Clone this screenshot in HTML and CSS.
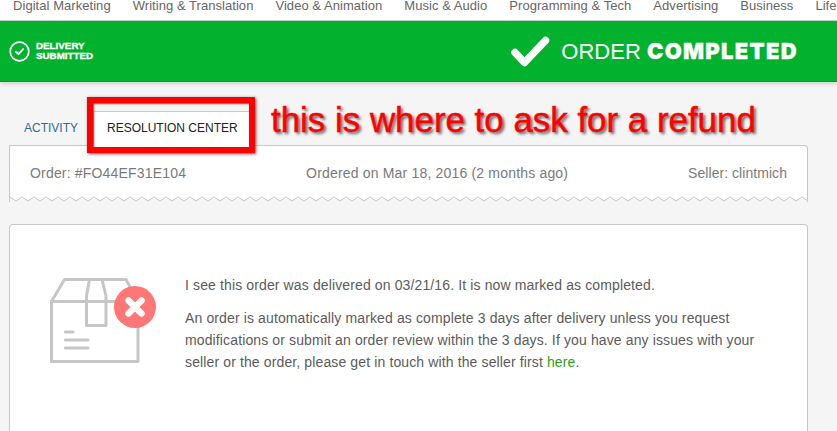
FILE: index.html
```html
<!DOCTYPE html>
<html lang="en">
<head>
    <meta charset="UTF-8">
    <title>Order completed</title>
    <link rel="stylesheet" href="styles.css">
</head>
<body>
    <nav class="top-nav">
        <a href="#">Digital Marketing</a>
        <a href="#">Writing &amp; Translation</a>
        <a href="#">Video &amp; Animation</a>
        <a href="#">Music &amp; Audio</a>
        <a href="#">Programming &amp; Tech</a>
        <a href="#">Advertising</a>
        <a href="#">Business</a>
        <a href="#">Lifestyle</a>
    </nav>

    <header class="status-bar">
        <div class="status-step">
            <svg class="step-icon" viewBox="0 0 21 21" width="21" height="21">
                <circle cx="10.5" cy="10.5" r="9.3" fill="none" stroke="#fff" stroke-width="1.7"/>
                <path d="M7 10.8l2.500 2.400 4.600-5" fill="none" stroke="#fff" stroke-width="1.8" stroke-linecap="round" stroke-linejoin="round"/>
            </svg>
            <div class="step-label">DELIVERY<br>SUBMITTED</div>
        </div>
        <div class="status-title">
            <svg class="title-check" viewBox="0 0 39 31" width="39" height="31">
                <path d="M4 16.500l9.500 10L34.500 4.500" fill="none" stroke="#fff" stroke-width="7.500" stroke-linecap="round" stroke-linejoin="round"/>
            </svg>
            <h1>ORDER <strong>COMPLETED</strong></h1>
        </div>
    </header>

    <main class="content">
        <div class="tabs">
            <a class="tab" href="#">ACTIVITY</a>
            <a class="tab active" href="#">RESOLUTION CENTER</a>
        </div>

        <section class="order-card">
            <span>Order: #FO44EF31E104</span>
            <span>Ordered on Mar 18, 2016 (2 months ago)</span>
            <span class="seller">Seller: clintmich</span>
            <svg class="zigzag" width="100%" height="6">
                <defs>
                    <pattern id="zig" width="12" height="6" patternUnits="userSpaceOnUse">
                        <path d="M0 1l6 4 6-4V6H0z" fill="#f5f5f5"/>
                        <path d="M0 1l6 4 6-4" fill="none" stroke="#c4c4c4" stroke-width="1"/>
                    </pattern>
                </defs>
                <rect width="100%" height="6" fill="url(#zig)"/>
            </svg>
        </section>

        <section class="notice-card">
            <svg class="box-icon" viewBox="0 0 90 85" width="90" height="85">
                <g fill="none" stroke="#c6c6c6" stroke-width="3" stroke-linejoin="round" stroke-linecap="round">
                    <path d="M1.500 23.500H88V83.500H1.500z"/>
                    <path d="M1.500 23.500L14.500 1.500H76L88 23.500"/>
                    <path d="M39.500 1.500L36.500 18V47.500H56V18L52 1.500"/>
                </g>
                <g stroke="#c6c6c6" stroke-width="3.200" stroke-linecap="round">
                    <path d="M15.500 54H23"/>
                    <path d="M15.500 62H38"/>
                    <path d="M15.500 70H38"/>
                </g>
                <circle cx="85" cy="29" r="21" fill="#ff7676"/>
                <path d="M78.500 22.500l13 13M91.500 22.500l-13 13" stroke="#fff" stroke-width="6.500" stroke-linecap="round"/>
            </svg>
            <div class="notice-text">
                <p>I see this order was delivered on 03/21/16. It is now marked as completed.</p>
                <p>An order is automatically marked as complete 3 days after delivery unless you request modifications or submit an order review within the 3 days. If you have any issues with your seller or the order, please get in touch with the seller first <a href="#">here</a>.</p>
            </div>
        </section>

        <div class="callout-box"></div>
        <div class="callout-text">this is where to ask for a refund</div>
    </main>
</body>
</html>
```

FILE: styles.css
```css
/* Colours */
:root {
    --green: #02b22e;
    --page: #f5f5f5;
    --line: #c8c8c8;
    --muted: #7a7a7a;
    --text: #5b5b5b;
    --red: #ff0000;
}

* {
    margin: 0;
    padding: 0;
    box-sizing: border-box;
}

html, body {
    height: 431px;
    overflow: hidden;
}

body {
    background: var(--page);
    color: var(--text);
    font-family: 'Liberation Sans', Arial, sans-serif;
    font-size: 14px;
}

a {
    text-decoration: none;
}

.top-nav {
    display: flex;
    gap: 22px;
    height: 21px;
    padding-left: 13px;
    background: #fff;
    border-bottom: 1px solid #d0d0d0;
    font-size: 13px;
    letter-spacing: 0.05px;
    line-height: 11px;
    white-space: nowrap;
    overflow: hidden;
}

.top-nav a {
    color: #666;
}

.status-bar {
    display: flex;
    justify-content: space-between;
    align-items: center;
    height: 61px;
    padding: 0 39px 0 9px;
    background: var(--green);
    border-bottom: 1px solid #079a2b;
    box-shadow: 0 2px 4px rgba(0,0,0,0.15);
    color: #fff;
}

.status-step {
    display: flex;
    align-items: center;
    gap: 6px;
}

.step-label {
    font-size: 9.8px;
    font-weight: bold;
    line-height: 10px;
    -webkit-text-stroke: 0.3px #fff;
}

.status-title {
    display: flex;
    align-items: center;
    gap: 11px;
}

.status-title h1 {
    font-size: 22px;
    font-weight: normal;
    white-space: nowrap;
}

.status-title strong {
    font-family: 'Inter', sans-serif;
    font-size: 22px;
    font-weight: 900;
    letter-spacing: 1.300px;
    -webkit-text-stroke: 0.3px #fff;
}

.content {
    position: relative;
    padding: 29px 29px 0 9px;
}

.tabs {
    display: flex;
    align-items: flex-end;
    height: 34px;
    font-size: 12px;
}

.tab {
    color: #2d6d97;
    padding: 0 15px;
    line-height: 33px;
}

.tab.active {
    position: relative;
    z-index: 1;
    width: 157px;
    height: 35px;
    margin-bottom: -1px;
    background: #fff;
    border: 1px solid var(--line);
    border-bottom: 0;
    color: #222;
    padding: 0 13px;
    white-space: nowrap;
}

.order-card {
    position: relative;
    display: flex;
    justify-content: space-between;
    height: 57px;
    padding: 19px 20px 0;
    background: #fff;
    border: 1px solid var(--line);
    border-bottom: 0;
    border-top-right-radius: 4px;
    color: var(--muted);
    letter-spacing: 0.18px;
}

.order-card .seller {
    letter-spacing: 0.05px;
}

.zigzag {
    position: absolute;
    left: 0;
    bottom: 0;
}

.notice-card {
    display: flex;
    gap: 45px;
    height: 207px;
    margin-top: 22px;
    padding: 49px 40px 0;
    background: #fff;
    border: 1px solid var(--line);
    border-bottom: 0;
    border-radius: 4px 4px 0 0;
}

.box-icon {
    flex-shrink: 0;
    margin-top: 4px;
    overflow: visible;
}

.notice-text {
    width: 575px;
    line-height: 22px;
    letter-spacing: 0.125px;
}

.notice-text p {
    margin-bottom: 11px;
}

.notice-text a {
    color: #2f9e1f;
}

.callout-box {
    position: absolute;
    left: 87px;
    top: 15px;
    width: 168px;
    height: 56px;
    border: 6px solid var(--red);
    z-index: 2;
    box-shadow: 1px 1px 3px #555, inset 1px 1px 2px #555;
}

.callout-text {
    position: absolute;
    left: 271px;
    top: 18px;
    color: var(--red);
    font-size: 34.900px;
    line-height: 40px;
    -webkit-text-stroke: 0.5px var(--red);
    text-shadow: 2px 2px 3px #555;
    white-space: nowrap;
}
```
